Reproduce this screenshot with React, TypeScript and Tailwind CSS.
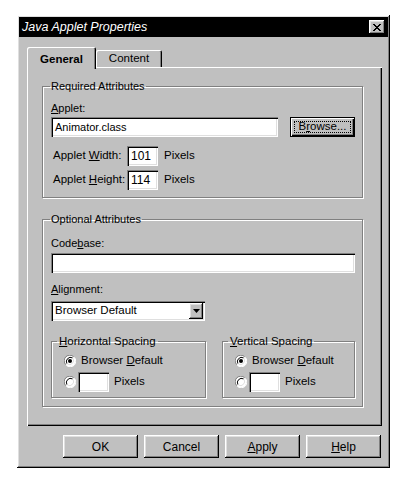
import React from "react";

const raised =
  "shadow-[inset_-1px_-1px_0_#000,inset_1px_1px_0_#fff,inset_-2px_-2px_0_#808080,inset_2px_2px_0_#dfdfdf]";
const sunken =
  "shadow-[inset_1px_1px_0_#808080,inset_2px_2px_0_#000,inset_-1px_-1px_0_#fff,inset_-2px_-2px_0_#dfdfdf]";
const etched = "border border-[#808080] shadow-[1px_1px_0_#fff,inset_1px_1px_0_#fff]";

function Field({ w, value, className = "" }: { w: string; value?: string; className?: string }) {
  return (
    <div className={`${w} h-[20px] bg-white ${sunken} pl-[4px] flex items-center text-[11px] leading-none ${className}`}>
      {value}
    </div>
  );
}

function Radio({ checked }: { checked?: boolean }) {
  return (
    <svg width="12" height="12" viewBox="0 0 12 12" className="shrink-0">
      <circle cx="6" cy="6" r="5.5" fill="#fff" />
      <path d="M1.8 9.7 A5.5 5.5 0 0 1 9.7 1.8" stroke="#808080" strokeWidth="1" fill="none" />
      <path d="M2.9 8.6 A4.2 4.2 0 0 1 8.6 2.9" stroke="#000" strokeWidth="1" fill="none" />
      <path d="M10.2 2.3 A5.5 5.5 0 0 1 2.3 10.2" stroke="#fff" strokeWidth="1" fill="none" />
      <path d="M9.1 3.4 A4.2 4.2 0 0 1 3.4 9.1" stroke="#dfdfdf" strokeWidth="1" fill="none" />
      {checked && <circle cx="6" cy="6" r="2" fill="#000" />}
    </svg>
  );
}

function Btn({ children }: { children: React.ReactNode }) {
  return (
    <div className={`w-[75px] h-[23px] ${raised} flex items-center justify-center text-[12px]`}>{children}</div>
  );
}

export default function App() {
  return (
    <div className="w-[413px] h-[489px] bg-white pt-[15px] pl-[17px] font-['Liberation_Sans',Arial,sans-serif] text-[11px] text-black">
      <div className={`w-[373px] h-[453px] bg-[#c0c0c0] p-[2px] flex flex-col ${raised}`}>
        {/* Title bar */}
        <div className="h-[20px] bg-black flex items-center justify-between pl-[3px] pr-[3px]">
          <span className="text-white italic text-[12.5px] leading-none">Java Applet Properties</span>
          <div className={`w-[16px] h-[14px] bg-[#c0c0c0] ${raised} flex items-center justify-center`}>
            <svg width="8" height="7" viewBox="0 0 8 7">
              <path d="M0 0h2v1h1v1h2v-1h1v-1h2v1h-1v1h-1v1h-1v1h1v1h1v1h1v1h-2v-1h-1v-1h-2v1h-1v1h-2v-1h1v-1h1v-1h1v-1h-1v-1h-1v-1h-1z" fill="#000" />
            </svg>
          </div>
        </div>

        <div className="pl-[8px] pr-[6px] pt-[10px] flex flex-col">
          {/* Tabs */}
          <div className="relative z-10 flex items-end h-[20px]">
            <div className="w-[69px] h-[22px] -mb-[2px] bg-[#c0c0c0] rounded-t-[2px] shadow-[inset_1px_1px_0_#fff,inset_-1px_0_0_#000,inset_-2px_0_0_#808080] flex items-start justify-center pt-[4px] font-bold text-[11.5px]">
              General
            </div>
            <div className="w-[66px] h-[17px] rounded-t-[2px] shadow-[inset_1px_1px_0_#fff,inset_-1px_0_0_#000,inset_-2px_0_0_#808080] flex items-center justify-center text-[11.5px]">
              Content
            </div>
          </div>

          {/* Panel */}
          <div className="h-[359px] shadow-[inset_1px_1px_0_#fff,inset_-1px_-1px_0_#000,inset_-2px_-2px_0_#808080] pt-[13px] pl-[15px] flex flex-col">
            {/* Required */}
            <fieldset className={`w-[321px] ${etched} pl-[8px] pr-[7px] pb-[7px]`}>
              <legend className="-ml-[1px] px-[1px] leading-[13px]">Required Attributes</legend>
              <div className="mt-[9px] leading-[13px]">
                <u>A</u>pplet:
              </div>
              <div className="mt-[2px] flex items-center justify-between">
                <Field w="w-[227px]" value="Animator.class" />
                <div className="w-[65px] h-[20px] border border-black shadow-[inset_1px_1px_0_#fff,inset_-1px_-1px_0_#000,inset_-2px_-2px_0_#808080] p-[3px]">
                  <div className="w-full h-full border border-dotted border-black flex items-center justify-center text-[11.5px] leading-none">
                    B<u>r</u>owse...
                  </div>
                </div>
              </div>
              <div className="mt-[9px] flex items-center">
                <span className="w-[76px] pl-[2px] text-[11.5px]">
                  Applet <u>W</u>idth:
                </span>
                <Field w="w-[31px]" value="101" className="pl-[3px] text-[12px]" />
                <span className="ml-[6px] text-[11.5px]">Pixels</span>
              </div>
              <div className="mt-[4px] flex items-center">
                <span className="w-[76px] pl-[2px] text-[11.5px]">
                  Applet <u>H</u>eight:
                </span>
                <Field w="w-[31px]" value="114" className="pl-[3px] text-[12px]" />
                <span className="ml-[6px] text-[11.5px]">Pixels</span>
              </div>
            </fieldset>

            {/* Optional */}
            <fieldset className={`w-[321px] mt-[15px] ${etched} pl-[8px] pr-[7px] pb-[8px]`}>
              <legend className="-ml-[1px] px-[1px] leading-[13px]">Optional Attributes</legend>
              <div className="mt-[11px] leading-[13px]">
                Code<u>b</u>ase:
              </div>
              <Field w="w-[304px]" className="mt-[3px]" />
              <div className="mt-[10px] leading-[13px]">
                <u>A</u>lignment:
              </div>
              <div className={`mt-[5px] w-[154px] h-[20px] bg-white ${sunken} flex items-center justify-between pl-[4px] pr-[2px]`}>
                <span className="text-[11.5px] leading-none">Browser Default</span>
                <div className={`w-[14px] h-[16px] bg-[#c0c0c0] ${raised} flex items-center justify-center`}>
                  <svg width="7" height="4" viewBox="0 0 7 4">
                    <path d="M0 0h7l-3.5 4z" fill="#000" />
                  </svg>
                </div>
              </div>

              <div className="mt-[14px] flex items-start justify-between">
                <fieldset className={`w-[155px] ${etched} pl-[12px] pb-[5px]`}>
                  <legend className="-ml-[7px] px-[2px] leading-[13px] text-[11.5px]">
                    <u>H</u>orizontal Spacing
                  </legend>
                  <div className="mt-[6px] h-[14px] flex items-center">
                    <Radio checked />
                    <span className="ml-[5px] text-[11.5px]">
                      Browser <u>D</u>efault
                    </span>
                  </div>
                  <div className="mt-[4px] flex items-center">
                    <Radio />
                    <Field w="w-[31px]" className="ml-[2px]" />
                    <span className="ml-[5px] text-[11.5px]">Pixels</span>
                  </div>
                </fieldset>
                <fieldset className={`w-[133px] ${etched} pl-[12px] pb-[5px]`}>
                  <legend className="-ml-[7px] px-[2px] leading-[13px] text-[11.5px]">
                    <u>V</u>ertical Spacing
                  </legend>
                  <div className="mt-[6px] h-[14px] flex items-center">
                    <Radio checked />
                    <span className="ml-[5px] text-[11.5px]">
                      Browser <u>D</u>efault
                    </span>
                  </div>
                  <div className="mt-[4px] flex items-center">
                    <Radio />
                    <Field w="w-[31px]" className="ml-[2px]" />
                    <span className="ml-[5px] text-[11.5px]">Pixels</span>
                  </div>
                </fieldset>
              </div>
            </fieldset>
          </div>

          {/* Buttons */}
          <div className="mt-[9px] flex justify-end gap-[6px] pr-[1px]">
            <Btn>OK</Btn>
            <Btn>Cancel</Btn>
            <Btn>
              <u>A</u>pply
            </Btn>
            <Btn>
              <u>H</u>elp
            </Btn>
          </div>
        </div>
      </div>
    </div>
  );
}
